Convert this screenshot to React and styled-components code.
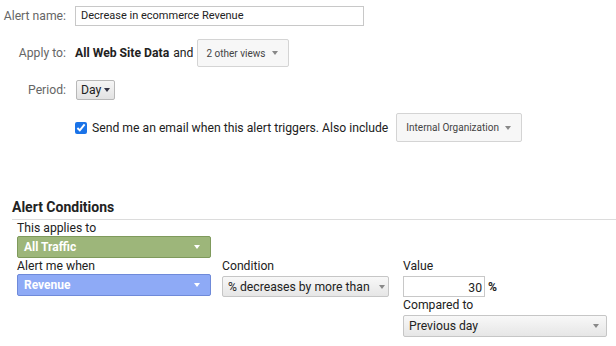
import React from 'react';
import styled, { createGlobalStyle } from 'styled-components';

const Global = createGlobalStyle`
  body {
    margin: 0;
    background: #fff;
    font-family: Roboto, "Liberation Sans", Arial, sans-serif;
    color: #222;
  }
`;

const Page = styled.div`
  width: 616px;
  height: 346px;
  overflow: hidden;
  padding-top: 6px;
  box-sizing: border-box;
  white-space: nowrap;
`;

const Form = styled.div`
  display: grid;
  grid-template-columns: 66px 1fr;
  column-gap: 9px;
  row-gap: 13px;
  align-items: center;
`;

const Label = styled.div`
  font-size: 12.2px;
  color: #666;
  text-align: right;
`;

const Field = styled.div`
  display: flex;
  align-items: center;
  font-size: 12.2px;
  color: #222;
  gap: ${(p) => p.$gap ?? 4}px;
`;

const TextInput = styled.div`
  width: 289px;
  height: 20px;
  box-sizing: border-box;
  border: 1px solid #c8c8c8;
  padding: 0 5px;
  font-size: 11px;
  line-height: 18px;
  color: #222;
`;

const Caret = styled.span`
  display: inline-block;
  flex: none;
  width: 0;
  height: 0;
  border-left: 3.5px solid transparent;
  border-right: 3.5px solid transparent;
  border-top: 4px solid ${(p) => p.$color || '#888'};
`;

const Menu = styled.div`
  display: flex;
  align-items: center;
  justify-content: space-between;
  box-sizing: border-box;
  width: ${(p) => p.$w}px;
  height: ${(p) => p.$h}px;
  padding: 0 10px 0 ${(p) => p.$pl || 8}px;
  border: 1px solid #d4d4d4;
  border-radius: 2px;
  background: #f7f7f7;
  font-size: 10px;
  color: #444;
  margin-left: ${(p) => p.$ml || 0}px;
`;

const DayButton = styled.div`
  display: flex;
  align-items: center;
  gap: 3px;
  height: 20px;
  width: 39px;
  box-sizing: border-box;
  padding: 0 4px;
  border: 1px solid #b8b8b8;
  border-radius: 2px;
  background: linear-gradient(#f6f6f6, #e2e2e2);
  font-size: 12.2px;
  color: #222;
  margin-left: 1px;
`;

const Check = styled.input`
  width: 12px;
  height: 12px;
  margin: 0 5px 0 0;
  accent-color: #1a73e8;
`;

const Heading = styled.h2`
  margin: 56px 0 0 12px;
  padding-bottom: 3px;
  border-bottom: 1px solid #dcdcdc;
  font-size: 14px;
  line-height: 18px;
  font-weight: 700;
  color: #222;
`;

const Conditions = styled.div`
  padding-left: 17px;
`;

const SubLabel = styled.div`
  font-size: 12.2px;
  line-height: 16px;
  color: #222;
`;

const Colored = styled.div`
  display: flex;
  align-items: center;
  justify-content: space-between;
  box-sizing: border-box;
  width: 194px;
  height: 22px;
  padding: 0 10px 0 6px;
  border: 1px solid ${(p) => p.$border};
  border-radius: 2px;
  background: ${(p) => p.$bg};
  color: #fff;
  font-size: 12px;
  font-weight: 700;
`;

const Row = styled.div`
  display: flex;
  align-items: flex-start;
`;

const Col = styled.div`
  display: flex;
  flex-direction: column;
  margin-left: ${(p) => p.$ml || 0}px;
`;

const GrayMenu = styled.div`
  display: flex;
  align-items: center;
  justify-content: space-between;
  box-sizing: border-box;
  width: ${(p) => p.$w}px;
  height: ${(p) => p.$h || 21}px;
  margin-top: 2px;
  padding: 0 ${(p) => p.$pr || 8}px 0 5px;
  border: 1px solid #c6c6c6;
  border-radius: 2px;
  background: linear-gradient(#f8f8f8, #e6e6e6);
  font-size: 12.2px;
  color: #222;
`;

const ValueRow = styled.div`
  display: flex;
  align-items: center;
  gap: 3px;
  margin-top: 2px;
`;

const ValueInput = styled.div`
  width: 82px;
  height: 21px;
  box-sizing: border-box;
  border: 1px solid #c8c8c8;
  padding: 2px 2px 0 0;
  text-align: right;
  font-size: 12.2px;
  line-height: 18px;
  color: #222;
`;

const Percent = styled.span`
  font-size: 12.2px;
  font-weight: 700;
  color: #222;
`;

export default function App() {
  return (
    <Page>
      <Global />
      <Form>
        <Label>Alert name:</Label>
        <Field>
          <TextInput>Decrease in ecommerce Revenue</TextInput>
        </Field>

        <Label>Apply to:</Label>
        <Field $gap={4}>
          <b>All Web Site Data</b> and
          <Menu $w={92} $h={28}>
            2 other views <Caret />
          </Menu>
        </Field>

        <Label>Period:</Label>
        <Field>
          <DayButton>
            Day <Caret $color="#334" />
          </DayButton>
        </Field>

        <span />
        <Field $gap={0}>
          <Check type="checkbox" defaultChecked />
          Send me an email when this alert triggers. Also include
          <Menu $w={126} $h={29} $ml={8} $pl={9}>
            Internal Organization <Caret />
          </Menu>
        </Field>
      </Form>

      <Heading>Alert Conditions</Heading>

      <Conditions>
        <SubLabel>This applies to</SubLabel>
        <Colored $bg="#9db67a" $border="#7f9a5c">
          All Traffic <Caret $color="#fff" />
        </Colored>
        <Row>
          <Col>
            <SubLabel>Alert me when</SubLabel>
            <Colored $bg="#8eaaf6" $border="#6f8ad9">
              Revenue <Caret $color="#fff" />
            </Colored>
          </Col>
          <Col $ml={11}>
            <SubLabel>Condition</SubLabel>
            <GrayMenu $w={167} $pr={3}>
              % decreases by more than <Caret />
            </GrayMenu>
          </Col>
          <Col $ml={14}>
            <SubLabel>Value</SubLabel>
            <ValueRow>
              <ValueInput>30</ValueInput>
              <Percent>%</Percent>
            </ValueRow>
            <SubLabel>Compared to</SubLabel>
            <GrayMenu $w={204} $h={22} $pr={7}>
              Previous day <Caret />
            </GrayMenu>
          </Col>
        </Row>
      </Conditions>
    </Page>
  );
}
